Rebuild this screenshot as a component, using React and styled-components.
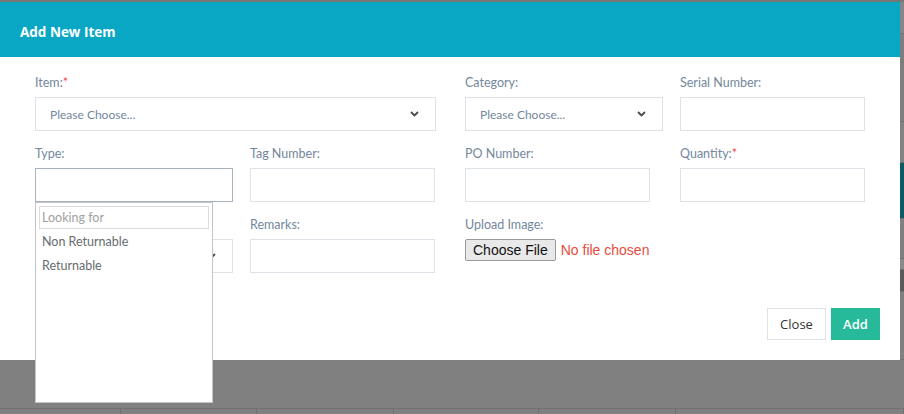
import React from "react";
import styled, { createGlobalStyle } from "styled-components";

const GlobalStyle = createGlobalStyle`
  html, body {
    margin: 0;
    padding: 0;
    background: #808080;
    overflow: hidden;
  }
  * {
    box-sizing: border-box;
  }
`;

const Chevron = () => (
  <svg width="9" height="6" viewBox="0 0 9 6">
    <path d="M1 1 L4.5 4.5 L8 1" fill="none" stroke="#4a4a4a" strokeWidth="1.8" />
  </svg>
);

function App() {
  return (
    <>
      <GlobalStyle />
      <Page>
        <TopStrip />
        <Stage>
          <Modal>
            <Header>
              <Title>Add New Item</Title>
            </Header>
            <Body>
              <FormGrid>
                <Field $span={2}>
                  <Label>Item:<Req>*</Req></Label>
                  <SelectBox>
                    <span>Please Choose...</span>
                    <Chevron />
                  </SelectBox>
                </Field>
                <Field>
                  <Label>Category:</Label>
                  <SelectBox $fixed>
                    <span>Please Choose...</span>
                    <Chevron />
                  </SelectBox>
                </Field>
                <Field>
                  <Label>Serial Number:</Label>
                  <Input />
                </Field>

                <Field>
                  <Label>Type:</Label>
                  <Picker>
                    <SelectBox $fixed $open />
                    <Menu>
                      <Search placeholder="Looking for" />
                      <Option>Non Returnable</Option>
                      <Option>Returnable</Option>
                    </Menu>
                  </Picker>
                </Field>
                <Field>
                  <Label>Tag Number:</Label>
                  <Input />
                </Field>
                <Field>
                  <Label>PO Number:</Label>
                  <Input />
                </Field>
                <Field>
                  <Label>Quantity:<Req>*</Req></Label>
                  <Input />
                </Field>

                {/* select hidden under the open menu */}
                <Field>
                  <Label>&nbsp;</Label>
                  <SelectBox $fixed>
                    <span />
                    <Chevron />
                  </SelectBox>
                </Field>
                <Field>
                  <Label>Remarks:</Label>
                  <Input />
                </Field>
                <Field $span={2}>
                  <Label>Upload Image:</Label>
                  <FileInput type="file" />
                </Field>
              </FormGrid>
              <Footer>
                <Button $w={59}>Close</Button>
                <Button $w={49} $primary>Add</Button>
              </Footer>
            </Body>
          </Modal>
          <SideStrip>
            <Seg $h={32} $bg="#868686" />
            <Seg $h={88} $bg="#7e7e7e" />
            <Seg $h={41} $bg="#838383" />
            <Seg $h={56} $bg="#0c5b63" />
            <Seg $h={40} $bg="#808080" />
            <Seg $h={11} $bg="#8a8a8a" />
            <Seg $h={22} $bg="#5a5a5a" />
            <Seg $h={68} $bg="#808080" />
          </SideStrip>
        </Stage>
        <Backdrop>
          <TableHead>
            <Cell $w={121} />
            <Cell $w={136} />
            <Cell $w={137} />
            <Cell $w={145} />
            <Cell $w={137} />
            <Cell $w={228} />
          </TableHead>
        </Backdrop>
      </Page>
    </>
  );
}

const Page = styled.div`
  width: 904px;
  height: 414px;
  display: flex;
  flex-direction: column;
  font-family: "Lato", "Open Sans", sans-serif;
`;

const TopStrip = styled.div`
  height: 2px;
  background: #777777;
`;

const Stage = styled.div`
  display: flex;
  height: 358px;
`;

const Modal = styled.div`
  width: 900px;
  background: #ffffff;
  display: flex;
  flex-direction: column;
  position: relative;
  z-index: 2;
`;

const Header = styled.div`
  height: 55px;
  background: #0aa7c5;
  display: flex;
  align-items: center;
  padding: 4px 20px 0;
`;

const Title = styled.h4`
  margin: 0;
  color: #ffffff;
  font-family: "Open Sans", sans-serif;
  font-size: 13.5px;
  font-weight: 700;
`;

const Body = styled.div`
  padding: 17px 20px 0 35px;
  flex: 1;
  display: flex;
  flex-direction: column;
`;

const FormGrid = styled.div`
  display: grid;
  grid-template-columns: repeat(4, 185px);
  column-gap: 30px;
  row-gap: 14px;
`;

const Field = styled.div`
  grid-column: span ${(p) => p.$span || 1};
  display: flex;
  flex-direction: column;
  min-width: 0;
`;

const Label = styled.label`
  font-size: 12.5px;
  line-height: 18px;
  color: #73879c;
  margin-bottom: 5px;
`;

const Req = styled.span`
  color: #e74c3c;
`;

const SelectBox = styled.div`
  height: 34px;
  width: ${(p) => (p.$fixed ? "198px" : "401px")};
  border: 1px solid ${(p) => (p.$open ? "#aab2bd" : "#dde2e8")};
  background: #ffffff;
  display: flex;
  align-items: center;
  justify-content: space-between;
  padding: 0 16px 0 14px;
  font-size: 12px;
  color: #73879c;
  flex-shrink: 0;
`;

const Input = styled.input`
  height: 34px;
  width: 185px;
  border: 1px solid #dde2e8;
  background: #ffffff;
  padding: 0 12px;
  outline: none;
`;

const Picker = styled.div`
  position: relative;
`;

const Menu = styled.div`
  position: absolute;
  top: 100%;
  left: 0;
  width: 178px;
  height: 201px;
  background: #ffffff;
  border: 1px solid #c4c4c4;
  padding: 3px 3px;
  z-index: 5;
  display: flex;
  flex-direction: column;
`;

const Search = styled.input`
  height: 23px;
  width: 100%;
  border: 1px solid #dcdcdc;
  padding: 0 2px;
  font-family: "Lato", sans-serif;
  font-size: 12.5px;
  color: #555555;
  outline: none;
  margin-bottom: 1px;
  &::placeholder {
    color: #a0a0a0;
  }
`;

const Option = styled.div`
  height: 24px;
  line-height: 24px;
  padding: 0 3px;
  font-size: 12.5px;
  color: #666b70;
`;

const FileInput = styled.input`
  font-family: "Liberation Sans", Arial, sans-serif;
  font-size: 14px;
  color: #e74c3c;
  height: 22px;
  &::file-selector-button {
    font-family: "Liberation Sans", Arial, sans-serif;
    font-size: 14px;
    color: #111111;
    height: 22px;
    padding: 0 7px;
    margin-right: 5px;
    background: #e9e9e9;
    border: 1px solid #9a9a9a;
    border-radius: 2px;
  }
`;

const Footer = styled.div`
  display: flex;
  justify-content: flex-end;
  gap: 5px;
  margin-top: 35px;
`;

const Button = styled.button`
  width: ${(p) => p.$w}px;
  height: 32px;
  padding: 0;
  font-family: "Open Sans", sans-serif;
  font-size: 13px;
  font-weight: ${(p) => (p.$primary ? 600 : 400)};
  color: ${(p) => (p.$primary ? "#ffffff" : "#333333")};
  background: ${(p) => (p.$primary ? "#26b99a" : "#ffffff")};
  border: 1px solid ${(p) => (p.$primary ? "#26b99a" : "#e3e3e3")};
  border-radius: 0;
`;

const SideStrip = styled.div`
  flex: 1;
  display: flex;
  flex-direction: column;
`;

const Seg = styled.div`
  height: ${(p) => p.$h}px;
  background: ${(p) => p.$bg};
  border-bottom: 1px solid #707070;
`;

const Backdrop = styled.div`
  flex: 1;
  display: flex;
  flex-direction: column;
  justify-content: flex-end;
`;

const TableHead = styled.div`
  height: 6px;
  display: flex;
  border-top: 1px solid #707070;
`;

const Cell = styled.div`
  width: ${(p) => p.$w}px;
  border-right: 1px solid #707070;
`;

export default App;
